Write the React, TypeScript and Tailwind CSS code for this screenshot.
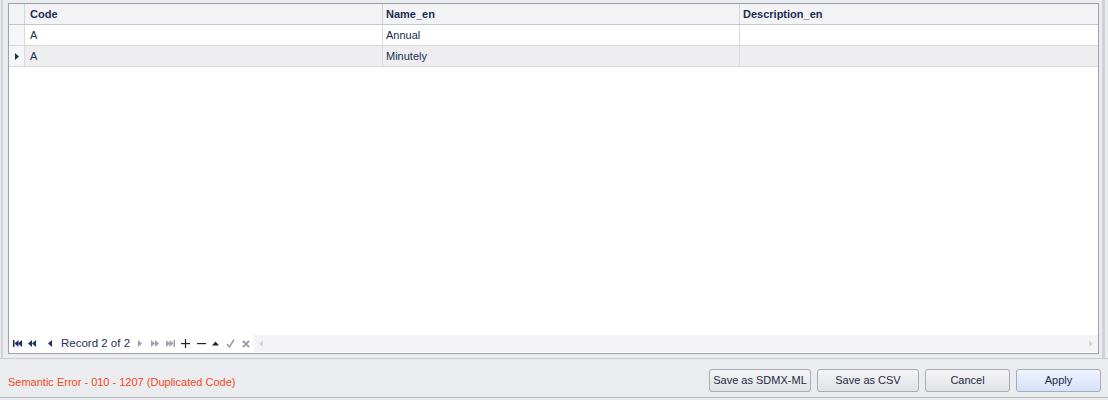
import React from 'react';

const navy = '#1e3160';
const grayIcon = '#9ca1ab';

const rows = [
  { code: 'A', name: 'Annual', desc: '', current: false },
  { code: 'A', name: 'Minutely', desc: '', current: true },
];

// Navigator glyphs
const Tri = ({ dir, x, color }: { dir: 'l' | 'r'; x: number; color: string }) =>
  dir === 'l' ? (
    <polygon points={`${x + 4},0 ${x + 4},7 ${x},3.5`} fill={color} />
  ) : (
    <polygon points={`${x},0 ${x},7 ${x + 4},3.5`} fill={color} />
  );

const NavIcon = ({ kind, color }: { kind: string; color: string }) => {
  if (kind === 'first')
    return (
      <svg width="9" height="7" viewBox="0 0 9 7">
        <rect x="0" y="0" width="1.5" height="7" fill={color} />
        <Tri dir="l" x={1.5} color={color} />
        <Tri dir="l" x={5} color={color} />
      </svg>
    );
  if (kind === 'prevPage')
    return (
      <svg width="8" height="7" viewBox="0 0 8 7">
        <Tri dir="l" x={0} color={color} />
        <Tri dir="l" x={4} color={color} />
      </svg>
    );
  if (kind === 'prev')
    return (
      <svg width="4" height="7" viewBox="0 0 4 7">
        <Tri dir="l" x={0} color={color} />
      </svg>
    );
  if (kind === 'next')
    return (
      <svg width="4" height="7" viewBox="0 0 4 7">
        <Tri dir="r" x={0} color={color} />
      </svg>
    );
  if (kind === 'nextPage')
    return (
      <svg width="8" height="7" viewBox="0 0 8 7">
        <Tri dir="r" x={0} color={color} />
        <Tri dir="r" x={4} color={color} />
      </svg>
    );
  if (kind === 'last')
    return (
      <svg width="9" height="7" viewBox="0 0 9 7">
        <Tri dir="r" x={0} color={color} />
        <Tri dir="r" x={3.5} color={color} />
        <rect x="7.5" y="0" width="1.5" height="7" fill={color} />
      </svg>
    );
  if (kind === 'plus')
    return (
      <svg width="9" height="9" viewBox="0 0 9 9">
        <rect x="0" y="4" width="9" height="1.2" fill={color} />
        <rect x="3.9" y="0" width="1.2" height="9" fill={color} />
      </svg>
    );
  if (kind === 'minus')
    return (
      <svg width="9" height="9" viewBox="0 0 9 9">
        <rect x="0" y="4" width="9" height="1.2" fill={color} />
      </svg>
    );
  if (kind === 'up')
    return (
      <svg width="7" height="5" viewBox="0 0 7 5">
        <polygon points="0,4.5 7,4.5 3.5,0.5" fill={color} />
      </svg>
    );
  if (kind === 'check')
    return (
      <svg width="9" height="9" viewBox="0 0 9 9">
        <path d="M1 5 L3.5 8 L8 0.5" stroke={color} strokeWidth="1.6" fill="none" />
      </svg>
    );
  return (
    <svg width="8" height="8" viewBox="0 0 8 8">
      <path d="M1 1 L7 7 M7 1 L1 7" stroke={color} strokeWidth="2" fill="none" />
    </svg>
  );
};

const Btn = ({ label, w, primary }: { label: string; w: string; primary?: boolean }) => (
  <button
    className={`${w} h-[23px] rounded-[3px] border border-[#a8abb3] text-[11px] text-[#1f2a44] flex items-center justify-center ${
      primary
        ? 'bg-gradient-to-b from-[#eef3fe] to-[#d6e1fa]'
        : 'bg-gradient-to-b from-[#f4f4f6] to-[#e2e3e7]'
    }`}
  >
    {label}
  </button>
);

export default function App() {
  return (
    <div
      className="w-[1108px] h-[400px] bg-[#ebecef] flex flex-col overflow-hidden"
      style={{ fontFamily: '"Liberation Sans", Arial, sans-serif' }}
    >
      <div className="flex h-[358px]">
        {/* left frame edge */}
        <div className="w-[8px] flex">
          <div className="w-[1px] bg-[#e9eaee]" />
          <div className="w-[2px] bg-[#cfd1d7]" />
        </div>

        {/* grid */}
        <div className="w-[1091px] mt-[3px] mb-[4px] border border-[#a0a1ad] bg-white flex flex-col">
          {/* header */}
          <div className="flex h-[21px] bg-[#f3f3f5] border-b border-[#c5c7cf] text-[11px] font-bold text-[#1b2c52]">
            <div className="w-[16px] border-r border-[#d4d6dc]" />
            <div className="w-[358px] border-r border-[#d4d6dc] pl-[5px] flex items-center">Code</div>
            <div className="w-[357px] border-r border-[#d4d6dc] pl-[3px] flex items-center">Name_en</div>
            <div className="flex-1 pl-[3px] flex items-center">Description_en</div>
          </div>
          {rows.map((r, i) => (
            <div
              key={i}
              className={`flex h-[21px] border-b border-[#d8dade] text-[11px] text-[#1b2c52] ${
                r.current ? 'bg-[#eeeef0]' : 'bg-white'
              }`}
            >
              <div className="w-[16px] border-r border-[#d8dade] bg-[#f6f6f8] flex items-center justify-center">
                {r.current && (
                  <svg width="4" height="7" viewBox="0 0 4 7">
                    <polygon points="0,0 0,7 4,3.5" fill="#2a2f3a" />
                  </svg>
                )}
              </div>
              <div className="w-[358px] border-r border-[#d8dade] pl-[5px] flex items-center">{r.code}</div>
              <div className="w-[357px] border-r border-[#d8dade] pl-[3px] flex items-center">{r.name}</div>
              <div className="flex-1 pl-[3px] flex items-center">{r.desc}</div>
            </div>
          ))}
          <div className="flex-1" />

          {/* navigator + horizontal scroll */}
          <div className="flex h-[17px] mb-[1px] items-center">
            <div className="flex items-center h-full pl-[4px] text-[11px]" style={{ color: navy }}>
              <span className="flex"><NavIcon kind="first" color={navy} /></span>
              <span className="flex ml-[6px]"><NavIcon kind="prevPage" color={navy} /></span>
              <span className="flex ml-[12px]"><NavIcon kind="prev" color={navy} /></span>
              <span className="ml-[9px] w-[66px] whitespace-nowrap text-[11.5px]">Record 2 of 2</span>
              <span className="flex ml-[11px]"><NavIcon kind="next" color={grayIcon} /></span>
              <span className="flex ml-[9px]"><NavIcon kind="nextPage" color={grayIcon} /></span>
              <span className="flex ml-[7px]"><NavIcon kind="last" color={grayIcon} /></span>
              <span className="flex ml-[6px]"><NavIcon kind="plus" color="#1f2430" /></span>
              <span className="flex ml-[7px]"><NavIcon kind="minus" color="#1f2430" /></span>
              <span className="flex ml-[6px] mb-[1px]"><NavIcon kind="up" color="#1f2430" /></span>
              <span className="flex ml-[7px]"><NavIcon kind="check" color={grayIcon} /></span>
              <span className="flex ml-[7px]"><NavIcon kind="cross" color={grayIcon} /></span>
            </div>
            <div className="flex-1 h-full ml-[4px] bg-[#f3f3f6] flex items-center justify-between px-[5px]">
              <svg width="4" height="7" viewBox="0 0 4 7">
                <polygon points="4,0 4,7 0,3.5" fill="#d2d4da" />
              </svg>
              <svg width="4" height="7" viewBox="0 0 4 7">
                <polygon points="0,0 0,7 4,3.5" fill="#d2d4da" />
              </svg>
            </div>
          </div>
        </div>

        {/* right frame edge */}
        <div className="flex-1 flex justify-end pr-[3px]">
          <div className="w-[3px] bg-[#cfd1d7]" />
        </div>
      </div>

      <div className="h-[1px] bg-[#c9cbd2]" />

      {/* bottom bar */}
      <div className="flex items-start h-[38px] pl-[8px] pr-[7px] pt-[10px]">
        <div className="text-[11px] text-[#f2481c] whitespace-nowrap mt-[5px]">
          Semantic Error - 010 - 1207 (Duplicated Code)
        </div>
        <div className="flex-1" />
        <div className="flex gap-[6px]">
          <Btn label="Save as SDMX-ML" w="w-[102px]" />
          <Btn label="Save as CSV" w="w-[102px]" />
          <Btn label="Cancel" w="w-[85px]" />
          <Btn label="Apply" w="w-[85px]" primary />
        </div>
      </div>
      <div className="h-[1px] bg-[#b8bac2]" />
      <div className="flex-1 bg-[#ebecef]" />
    </div>
  );
}
